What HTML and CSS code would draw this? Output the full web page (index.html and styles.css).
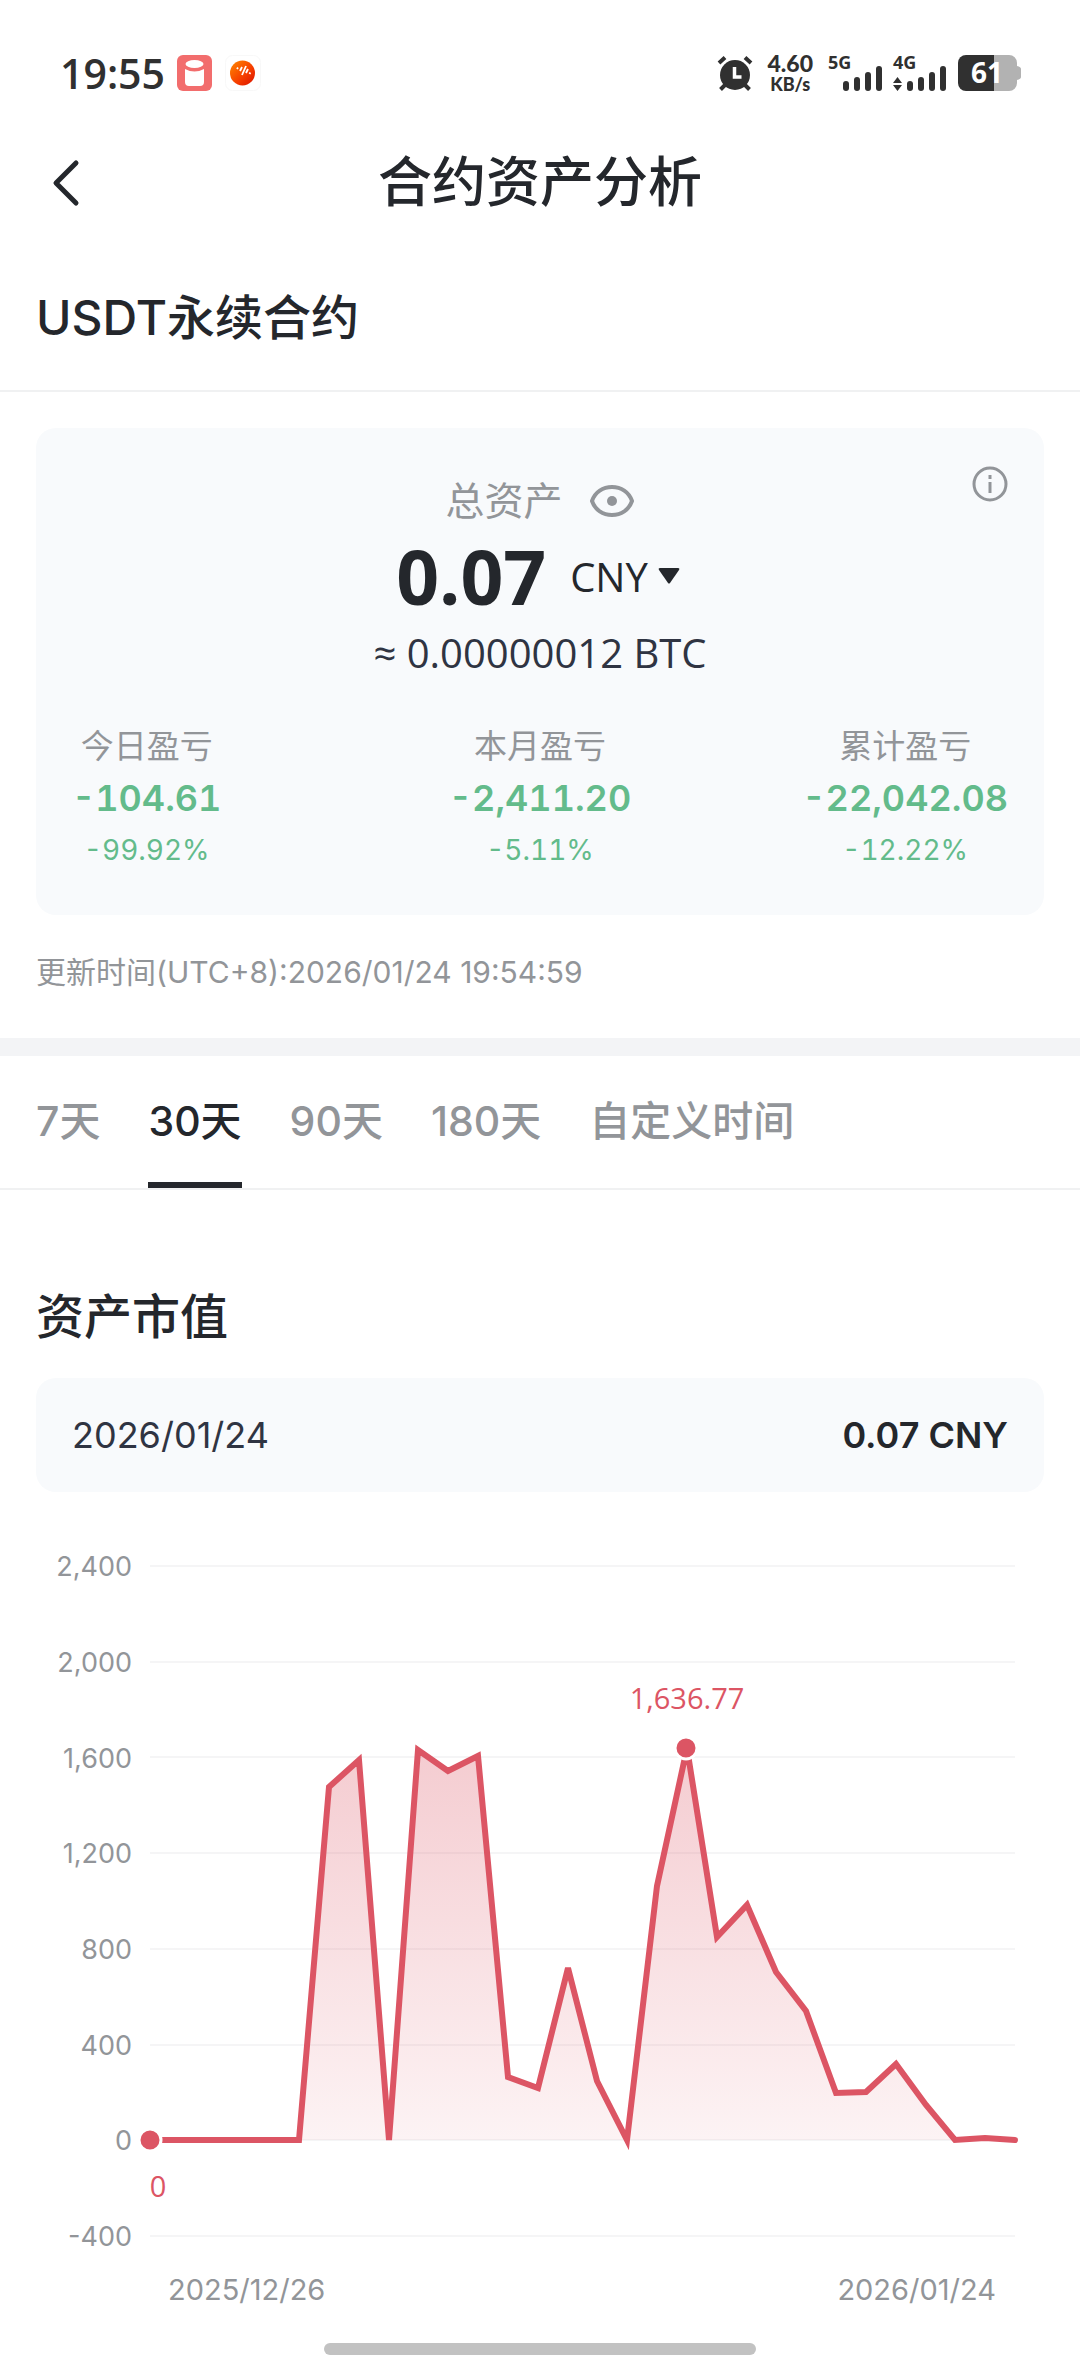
FILE: index.html
```html
<!DOCTYPE html>
<html lang="zh-CN">

<head>
  <meta charset="UTF-8" />
  <meta name="viewport" content="width=device-width, initial-scale=1" />
  <title>合约资产分析</title>
  <link rel="stylesheet" href="styles.css">
</head>

<body>
  <div class="status-bar">
    <div class="status-left">
      <span class="clock">19:55</span>
      <svg class="app-icon" viewBox="0 0 36 36" aria-hidden="true">
        <rect width="35" height="36" rx="6" fill="#f26d6d" />
        <path d="M8 14 Q17.500 19 27 14 V27 Q27 31 23 31 H12 Q8 31 8 27 Z" fill="#fff" />
        <ellipse cx="17.500" cy="9" rx="9" ry="4" fill="#fff" />
      </svg>
      <svg class="app-icon" viewBox="0 0 36 36" aria-hidden="true">
        <defs>
          <linearGradient id="ball" x1="0" y1="0" x2="1" y2="1">
            <stop offset="0" stop-color="#ff8a00" />
            <stop offset="0.600" stop-color="#f53b00" />
            <stop offset="1" stop-color="#d81200" />
          </linearGradient>
        </defs>
        <rect x="0.500" y="0.500" width="35" height="35" rx="7" fill="#fff" stroke="#f8f8f8" />
        <circle cx="17.500" cy="18" r="12.500" fill="url(#ball)" />
        <path d="M12 14l1-1.500M15 16l2-4M17 20l4-9M21 18l2-4M24.500 19l.8-1.500" stroke="#fff" stroke-width="1.800" fill="none" />
      </svg>
    </div>
    <div class="status-right">
      <svg class="alarm" viewBox="0 0 36 36" aria-hidden="true">
        <circle cx="18" cy="20" r="15" fill="#303030" />
        <path d="M2 8l6-5.500M34 8l-6-5.500M3.500 34.500l5-5M32.500 34.500l-5-5" stroke="#303030" stroke-width="4" fill="none" />
        <path d="M17.500 12v10h7" stroke="#fff" stroke-width="3.500" fill="none" />
      </svg>
      <div class="speed">
        <span class="speed-num">4.60</span>
        <span class="speed-unit">KB/s</span>
      </div>
      <svg class="signal" viewBox="0 0 56 36" role="img" aria-label="5G">
        <text class="net" x="0" y="14">5G</text>
        <g fill="#303030">
          <rect x="15" y="26" width="6" height="10" rx="3" />
          <rect x="26" y="22" width="6" height="14" rx="3" />
          <rect x="37" y="17" width="6" height="19" rx="3" />
          <rect x="48" y="11" width="6" height="25" rx="3" />
        </g>
      </svg>
      <svg class="signal" viewBox="0 0 56 36" role="img" aria-label="4G">
        <text class="net" x="0" y="14">4G</text>
        <g fill="#303030">
          <path d="M0 28l4.500-6 4.500 6zM0 30l4.500 6 4.500-6z" />
          <rect x="14" y="26" width="6" height="10" rx="3" />
          <rect x="25" y="22" width="6" height="14" rx="3" />
          <rect x="36" y="17" width="6" height="19" rx="3" />
          <rect x="47" y="11" width="6" height="25" rx="3" />
        </g>
      </svg>
      <svg class="battery" viewBox="0 0 64 36" role="img" aria-label="61%">
        <path d="M36 0h15a8 8 0 0 1 8 8v3q4 1 4 3v8q0 2-4 3v3a8 8 0 0 1-8 8H36z" fill="#b2b2b2" />
        <path d="M8 0h28v36H8a8 8 0 0 1-8-8V8a8 8 0 0 1 8-8z" fill="#303030" />
        <text class="battery-num" x="29" y="28">61</text>
      </svg>
    </div>
  </div>

  <header class="nav">
    <button class="back" aria-label="返回">
      <svg viewBox="0 0 30 48" aria-hidden="true">
        <path d="M26 4L6 24l20 20" />
      </svg>
    </button>
    <h1>合约资产分析</h1>
  </header>

  <h2 class="product">USDT永续合约</h2>

  <main>
    <section class="card">
      <button class="info" aria-label="说明">
        <svg viewBox="0 0 36 36" aria-hidden="true">
          <circle cx="18" cy="18" r="16" />
          <path d="M18 16v11M18 9v4" />
        </svg>
      </button>
      <div class="total-label">
        <span>总资产</span>
        <button class="eye" aria-label="隐藏资产">
          <svg viewBox="0 0 46 34" aria-hidden="true">
            <path d="M3 17C6 8 14 3 23 3s17 5 20 14C40 26 32 31 23 31S6 26 3 17z" />
            <circle cx="23" cy="17" r="5" />
          </svg>
        </button>
      </div>
      <div class="total">
        <strong>0.07</strong>
        <button class="currency">CNY
          <svg viewBox="0 0 22 16" aria-hidden="true"><path d="M2 0h18q2 0 1 2L12 15q-1 1-2 0L1 2Q0 0 2 0z" /></svg>
        </button>
      </div>
      <p class="btc">≈ 0.00000012 BTC</p>
      <div class="pnl">
        <div class="pnl-item">
          <span class="pnl-label">今日盈亏</span>
          <span class="pnl-value">-104.61</span>
          <span class="pnl-rate">-99.92%</span>
        </div>
        <div class="pnl-item">
          <span class="pnl-label">本月盈亏</span>
          <span class="pnl-value">-2,411.20</span>
          <span class="pnl-rate">-5.11%</span>
        </div>
        <div class="pnl-item">
          <span class="pnl-label">累计盈亏</span>
          <span class="pnl-value">-22,042.08</span>
          <span class="pnl-rate">-12.22%</span>
        </div>
      </div>
    </section>

    <p class="updated">更新时间(UTC+8):2026/01/24 19:54:59</p>

    <nav class="tabs">
      <button class="tab">7天</button>
      <button class="tab active">30天</button>
      <button class="tab">90天</button>
      <button class="tab">180天</button>
      <button class="tab">自定义时间</button>
    </nav>

    <h2 class="chart-title">资产市值</h2>
    <div class="selected">
      <span>2026/01/24</span>
      <strong>0.07 CNY</strong>
    </div>

    <svg class="chart" viewBox="0 0 1080 800" role="img" aria-label="资产市值">
      <defs>
        <linearGradient id="area" gradientUnits="userSpaceOnUse" x1="0" y1="229" x2="0" y2="620">
          <stop offset="0" stop-color="#dc5564" stop-opacity="0.300" />
          <stop offset="1" stop-color="#dc5564" stop-opacity="0.070" />
        </linearGradient>
      </defs>
      <path class="grid" d="M150 46H1015M150 142H1015M150 237H1015M150 333H1015M150 429H1015M150 525H1015M150 620H1015M150 716H1015" />
      <g class="y-axis">
        <text x="132" y="56">2,400</text>
        <text x="132" y="152">2,000</text>
        <text x="132" y="248">1,600</text>
        <text x="132" y="343">1,200</text>
        <text x="132" y="439">800</text>
        <text x="132" y="535">400</text>
        <text x="132" y="630">0</text>
        <text x="132" y="726">-400</text>
      </g>
      <polygon fill="url(#area)" points="299,620 329,267 359,240 389,620 418,230 448,251 478,236 508,557 538,568 568,448 597,561 627,620 657,366 687,228 717,417 747,385 776,452 806,491 836,573 866,572 896,544 926,585 955,620" />
      <polyline class="line" points="150,620 299,620 329,267 359,240 389,620 418,230 448,251 478,236 508,557 538,568 568,448 597,561 627,620 657,366 687,228 717,417 747,385 776,452 806,491 836,573 866,572 896,544 926,585 955,620 985,618 1015,620" />
      <circle class="dot" cx="150" cy="620" r="11" />
      <circle class="dot" cx="686" cy="228" r="11" />
      <text class="mark" x="158" y="677">0</text>
      <text class="mark" x="687" y="189">1,636.77</text>
      <text class="x-axis" x="168" y="780">2025/12/26</text>
      <text class="x-axis last" x="996" y="780">2026/01/24</text>
    </svg>
  </main>

  <div class="home-bar"></div>
</body>

</html>
```
FILE: styles.css
```css
* {
  box-sizing: border-box;
}

body {
  margin: 0;
  background: #fff;
  color: #24272c;
  font-family: Inter, "Noto Sans CJK SC", sans-serif;
}

h1,
h2,
p {
  margin: 0;
  font-weight: 500;
}

button {
  margin: 0;
  padding: 0;
  border: none;
  background: none;
  color: inherit;
  font: inherit;
  cursor: pointer;
}

svg {
  display: block;
  overflow: visible;
}

/* status bar */
.status-bar {
  display: flex;
  justify-content: space-between;
  align-items: center;
  height: 146px;
  padding: 0 58px 0 60px;
  color: #303030;
  font-family: "Open Sans", sans-serif;
}

.status-left,
.status-right {
  display: flex;
  align-items: center;
}

.status-left {
  gap: 12px;
}

.status-right {
  gap: 9px;
}

.clock {
  font-size: 41px;
  font-weight: 600;
}

.app-icon,
.alarm {
  width: 36px;
  height: 36px;
}

.speed {
  display: flex;
  flex-direction: column;
  align-items: center;
  margin: 0 6px;
  font-family: Lato, sans-serif;
  font-weight: 900;
}

.speed-num {
  font-size: 23px;
  line-height: 21px;
}

.speed-unit {
  font-size: 18px;
  line-height: 20px;
}

.signal {
  width: 56px;
  height: 36px;
}

.net {
  font-size: 18px;
  font-weight: 700;
  fill: #303030;
}

.battery {
  width: 64px;
  height: 36px;
}

.battery-num {
  font-size: 28px;
  font-weight: 700;
  fill: #fff;
  text-anchor: middle;
}

/* title bar */
.nav {
  display: grid;
  grid-template-columns: 60px 1fr 60px;
  align-items: center;
  height: 74px;
  padding: 0 50px;
}

.back svg {
  width: 30px;
  height: 48px;
  fill: none;
  stroke: #24272c;
  stroke-width: 5;
  stroke-linecap: round;
  stroke-linejoin: round;
}

.nav h1 {
  text-align: center;
  font-size: 54px;
  line-height: 74px;
}

.product {
  padding: 62px 36px 36px;
  border-bottom: 2px solid #f0f1f2;
  font-size: 48px;
  line-height: 72px;
}

/* asset card */
.card {
  position: relative;
  margin: 36px 36px 0;
  padding: 48px 36px 40px;
  border-radius: 20px;
  background: #f8fafc;
}

.info {
  position: absolute;
  top: 38px;
  right: 36px;
}

.info svg {
  width: 36px;
  height: 36px;
  fill: none;
  stroke: #929599;
  stroke-width: 3;
}

.total-label {
  display: flex;
  justify-content: center;
  align-items: center;
  gap: 26px;
  color: #929599;
  font-size: 39px;
  line-height: 50px;
}

.eye svg {
  width: 46px;
  height: 34px;
  fill: none;
  stroke: #929599;
  stroke-width: 4;
}

.eye circle {
  fill: #929599;
  stroke: none;
}

.total,
.btc {
  font-family: "Open Sans", sans-serif;
}

.total {
  display: flex;
  justify-content: center;
  align-items: center;
  gap: 24px;
}

.total strong {
  font-size: 75px;
  line-height: 100px;
}

.currency {
  display: flex;
  align-items: center;
  gap: 10px;
  padding-right: 4px;
  font-size: 40px;
}

.currency svg {
  width: 22px;
  height: 16px;
  fill: #24272c;
}

.btc {
  color: #2f3442;
  text-align: center;
  font-size: 40px;
  font-weight: 400;
  line-height: 54px;
}

.pnl {
  display: grid;
  grid-template-columns: 1fr auto 1fr;
  margin-top: 41px;
  font-variant-numeric: tabular-nums;
}

.pnl-item {
  display: flex;
  flex-direction: column;
  align-items: center;
  justify-self: center;
}

.pnl-item:first-child {
  justify-self: start;
}

.pnl-item:last-child {
  justify-self: end;
}

.pnl-label {
  color: #929599;
  font-size: 33px;
  line-height: 50px;
}

.pnl-value {
  color: #63bb8b;
  font-size: 36px;
  font-weight: 600;
  line-height: 54px;
}

.pnl-rate {
  color: #63bb8b;
  font-size: 28px;
  line-height: 50px;
}

.updated {
  padding: 33px 36px 42px;
  border-bottom: 18px solid #f3f4f6;
  color: #929599;
  font-size: 30px;
  font-weight: 400;
  line-height: 48px;
}

/* range tabs */
.tabs {
  display: flex;
  gap: 48px;
  padding: 0 36px;
  border-bottom: 2px solid #f0f1f2;
}

.tab {
  padding: 36px 0 32px;
  border-bottom: 6px solid transparent;
  color: #929599;
  font-size: 41px;
  font-weight: 500;
  line-height: 58px;
}

.tab.active {
  border-color: #24272c;
  color: #24272c;
}

/* chart */
.chart-title {
  padding: 91px 36px 25px;
  font-size: 48px;
  line-height: 72px;
}

.selected {
  display: flex;
  justify-content: space-between;
  align-items: center;
  margin: 0 36px 28px;
  padding: 30px 36px;
  border-radius: 20px;
  background: #f8fafc;
  font-size: 36px;
  line-height: 54px;
}

.selected span {
  color: #2f3442;
}

.selected strong {
  font-weight: 600;
}

.chart {
  width: 100%;
}

.grid {
  stroke: #f5f5f6;
  stroke-width: 2;
}

.y-axis,
.x-axis {
  fill: #929599;
  font-size: 27px;
}

.x-axis {
  font-size: 29px;
}

.y-axis,
.last {
  text-anchor: end;
}

.line {
  fill: none;
  stroke: #dc5564;
  stroke-width: 6;
  stroke-linecap: round;
  stroke-miterlimit: 3.9;
}

.dot {
  fill: #dc5564;
  stroke: #fff;
  stroke-width: 3;
}

.mark {
  fill: #dc5564;
  font-family: "Open Sans", sans-serif;
  font-size: 29px;
  text-anchor: middle;
}

.home-bar {
  width: 40%;
  height: 12px;
  margin: 23px auto 21px;
  border-radius: 6px;
  background: #c2c2c2;
}
```
